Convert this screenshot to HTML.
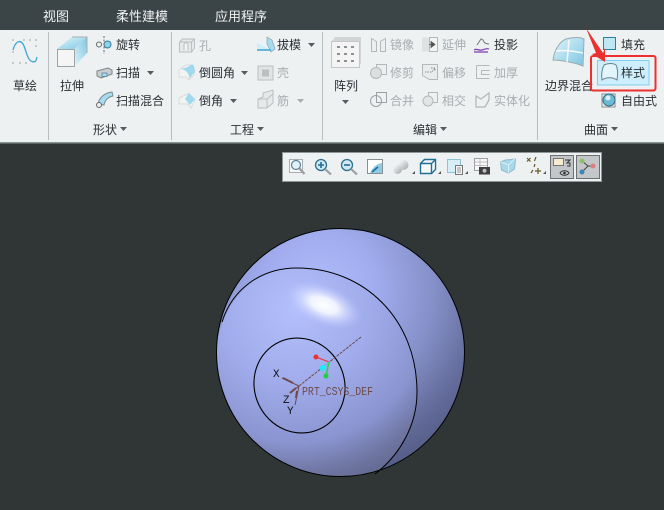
<!DOCTYPE html>
<html><head><meta charset="utf-8"><style>
html,body{margin:0;padding:0;width:664px;height:510px;overflow:hidden;background:#2f3635}
svg{display:block}
text{font-family:"Liberation Sans","Noto Sans CJK SC",sans-serif;font-size:12px;fill:#2b2f33}
.m{font-size:13px;fill:#f1f3f3}
.d{fill:#a9adb0}
.a{fill:#555b60}
.p{font-family:"Liberation Mono",monospace;font-size:11.500px;fill:#6e4a4a}
.q{font-family:"Liberation Mono",monospace;font-size:11px;fill:#111}
</style></head><body>
<svg width="664" height="510" viewBox="0 0 664 510" xmlns="http://www.w3.org/2000/svg">
<defs>
<radialGradient id="o" gradientUnits="userSpaceOnUse" cx="320" cy="290" r="190">
<stop offset="0" stop-color="#b0bcfa"/><stop offset=".3" stop-color="#a0acee"/><stop offset=".6" stop-color="#8590c8"/><stop offset=".85" stop-color="#636c9a"/><stop offset="1" stop-color="#555e88"/>
</radialGradient>
<radialGradient id="s" gradientUnits="userSpaceOnUse" cx="295" cy="310" r="190">
<stop offset="0" stop-color="#b4c0fd"/><stop offset=".4" stop-color="#a0abeb"/><stop offset=".7" stop-color="#8a94cf"/><stop offset=".86" stop-color="#6f76a2"/><stop offset="1" stop-color="#5d6488"/>
</radialGradient>
<radialGradient id="h" cx=".5" cy=".5" r=".5"><stop offset="0" stop-color="#fff"/><stop offset=".35" stop-color="#f4f6ff" stop-opacity=".95"/><stop offset="1" stop-color="#c0caff" stop-opacity="0"/></radialGradient>
<linearGradient id="c" x1="0" y1="0" x2="1" y2="1"><stop offset="0" stop-color="#e2f5fb"/><stop offset="1" stop-color="#7cc6e2"/></linearGradient>
<linearGradient id="c2" x1="0" y1="1" x2="1" y2="0"><stop offset="0" stop-color="#e2f5fb"/><stop offset="1" stop-color="#7cc6e2"/></linearGradient>
<linearGradient id="sb" x1="0" y1="0" x2="1" y2="1"><stop offset="0" stop-color="#fff"/><stop offset="1" stop-color="#a0a5aa"/></linearGradient>
<clipPath id="sph"><circle cx="340.500" cy="352.500" r="124"/></clipPath>
</defs>

<rect width="664" height="30" fill="#3b4547"/>
<text class="m" x="43" y="21">视图</text><text class="m" x="116" y="21">柔性建模</text><text class="m" x="215" y="21">应用程序</text>

<rect y="30" width="664" height="112" fill="#eef1f2"/>
<rect y="142" width="664" height="1.500" fill="#8b9292"/>
<g fill="#b7bcbe"><rect x="48" y="32" width="1" height="108"/><rect x="171" y="32" width="1" height="108"/><rect x="322" y="32" width="1" height="108"/><rect x="537" y="32" width="1" height="108"/></g>

<!-- sketch -->
<path d="M13 50C15 42 20 39 23 44S27 60 32 61.500 36 59 37 57" fill="none" stroke="#3da4d0" stroke-width="1.300"/>
<g fill="#666"><circle cx="13" cy="40" r=".6"/><circle cx="24" cy="40" r=".6"/><circle cx="30" cy="40" r=".6"/><circle cx="36" cy="40" r=".6"/><circle cx="13" cy="52" r=".6"/><circle cx="36" cy="46" r=".6"/><circle cx="13" cy="63" r=".6"/><circle cx="20" cy="63" r=".6"/><circle cx="26" cy="63" r=".6"/></g>
<text x="13" y="90">草绘</text>
<!-- extrude -->
<path d="M57 49L72 37H87L74 49Z" fill="url(#c)"/><path d="M74 49L87 37V53L74 67Z" fill="url(#c2)"/><rect x="57.500" y="49.500" width="17" height="17" fill="#f5f5f5" stroke="#a0a4a6"/><path d="M72 37h15v16" fill="none" stroke="#a9adb0"/>
<text x="60" y="90">拉伸</text>
<!-- revolve, sweep, blend -->
<circle cx="107.500" cy="44.500" r="3.500" fill="#8fd3ea" stroke="#2d7ea3"/><circle cx="99" cy="44.500" r="2.500" fill="none" stroke="#666"/><path d="M104 36v18" stroke="#666" stroke-dasharray="2 1.500"/>
<path d="M97 71l11-3 4 2v4l-11 4-4-2z" fill="#c9cdcf" stroke="#808487"/><rect x="102" y="73" width="5" height="3.500" fill="#a5dcef" stroke="#4f7b8c" stroke-width=".7"/>
<path d="M98 104c1-6 6-11 14-12l1 4c-5 1-8 4-9 9z" fill="#a5dcef" stroke="#7a8b93"/><circle cx="99" cy="105" r="2.500" fill="#eee" stroke="#666"/>
<text x="116" y="49">旋转</text><text x="116" y="77">扫描</text><path class="a" d="M147 71h7l-3.500 4z"/><text x="116" y="105">扫描混合</text>
<text x="93" y="134">形状</text><path class="a" d="M120 127h7l-3.500 4z"/>

<!-- engineering -->
<path d="M179.500 42l3-3h12v9l-3 4h-12z" fill="#e6e8e9" stroke="#bcc0c2"/><path d="M179.500 42h12v10M191.500 42l3-3" fill="none" stroke="#bcc0c2"/><path d="M184 50v-5c0-3 4-3 4 0v5" fill="#f2f3f3" stroke="#bcc0c2"/>
<text class="d" x="199" y="50">孔</text>
<path d="M257 42h6l4-5 5 3 3 9-4 3-8-1h-6z" fill="#eaf4f8"/><path d="M267 37l5 3 3 9-4 3-4-8z" fill="#a5dcef" stroke="#8ea2aa" stroke-width=".7"/><path d="M257 43v7h14" fill="#cfeef8"/><path d="M257 50h14" stroke="#3ba3cf" stroke-width="1.500"/>
<text x="277" y="49">拔模</text><path class="a" d="M308 43h7l-3.500 4z"/>
<path d="M179 70l7-5h4l5 5-1 5-5 5-3-3h-7z" fill="#f2f3f3" stroke="#d0d3d4" stroke-width=".7"/><path d="M181 69c4-1 8-2 11-5 3 2 3 6 2 9l-5 6c1-5-3-9-8-10z" fill="#9fd9ee"/>
<text x="199" y="77">倒圆角</text><path class="a" d="M241 71h7l-3.500 4z"/>
<rect x="258" y="66" width="15" height="14" fill="#e1e3e4" stroke="#bcc0c2"/><rect x="262" y="69.500" width="7" height="7" fill="#bcc0c2"/>
<text class="d" x="277" y="77">壳</text>
<path d="M179 98l8-4 1 0 7 6-4 8-3-4h-9z" fill="#f2f3f3" stroke="#d0d3d4" stroke-width=".7"/><path d="M185 99l4-6 6 6-5 6z" fill="#9fd9ee"/>
<text x="199" y="105">倒角</text><path class="a" d="M230 99h7l-3.500 4z"/>
<path d="M258 99l5-2v-4l10-3v13l-6 5h-9z" fill="#e6e8e9" stroke="#bcc0c2"/><path d="M258 99h9v9M267 99l6-5" fill="none" stroke="#bcc0c2"/>
<text class="d" x="277" y="105">筋</text><path class="d" d="M297 99h7l-3.500 4z"/>
<text x="230" y="134">工程</text><path class="a" d="M257 127h7l-3.500 4z"/>

<!-- pattern -->
<path d="M332 41l3-4h26v26l-3 4h-26z" fill="#d2d5d6"/><rect x="331.500" y="41.500" width="28" height="26" fill="#f4f4f4" stroke="#c4c7c9"/>
<g fill="#8d9194"><rect x="337" y="46" width="3" height="2"/><rect x="344" y="46" width="3" height="2"/><rect x="351" y="46" width="3" height="2"/><rect x="337" y="53" width="3" height="2"/><rect x="344" y="53" width="3" height="2"/><rect x="351" y="53" width="3" height="2"/><rect x="337" y="60" width="3" height="2"/><rect x="344" y="60" width="3" height="2"/><rect x="351" y="60" width="3" height="2"/></g>
<text x="334" y="90">阵列</text><path class="a" d="M342 100h7l-3.500 4z"/>

<!-- edit -->
<g fill="#eceeef" stroke="#b4b8ba">
<path d="M371.500 38.500l5 3v10h-5zM385.500 38.500l-5 3v10h5z"/>
<rect x="422" y="37.500" width="7" height="14" fill="#dfe2e3" stroke="none"/><rect x="429.500" y="37.500" width="8" height="14" fill="#f2f3f3"/>
<rect x="376.500" y="64.500" width="10" height="10"/><circle cx="376" cy="73" r="5.500" fill="#dcdfe0"/>
<path d="M422.500 64.500h15v15h-8l-7-4z" fill="#e9ebec"/>
<rect x="376.500" y="92.500" width="10" height="10" fill="none" stroke="#9da1a3"/><circle cx="376" cy="101" r="5.500" fill="none" stroke="#9da1a3"/>
<rect x="428.500" y="92.500" width="9" height="10" fill="none"/><circle cx="428" cy="101" r="5" fill="#e2e4e5"/>
<path d="M476.500 65.500h13M476.500 65.500v13h13M481.500 70.500h8M481.500 70.500v4h8" fill="none"/>
<path d="M476 96l5 3 8-6v7l-4 7h-9z" fill="none" stroke-width="1.300"/>
</g>
<path d="M431 41.500l4 3-4 3zM429 44.500h3" fill="#555" stroke="#555" stroke-width=".8"/>
<path d="M425 72h7l3-4M431 68h4v3" fill="none" stroke="#8f9395" stroke-dasharray="1.500 1"/>
<text class="d" x="390" y="49">镜像</text><text class="d" x="442" y="49">延伸</text><text x="494" y="49">投影</text>
<text class="d" x="390" y="77">修剪</text><text class="d" x="442" y="77">偏移</text><text class="d" x="494" y="77">加厚</text>
<text class="d" x="390" y="105">合并</text><text class="d" x="442" y="105">相交</text><text class="d" x="494" y="105">实体化</text>
<path d="M474 50c3-2 5 1 8 0s5-2 7-1M474 52h14" fill="none" stroke="#7b3fb0" stroke-width="1.200"/><path d="M477 45l4-6c3 0 2 3 4 4s3 1 4 1" fill="none" stroke="#777"/>
<text x="413" y="134">编辑</text><path class="a" d="M440 127h7l-3.500 4z"/>

<!-- boundary blend -->
<path d="M553 60c1-9 6-18 13-21 8-2 14-2 18 0l-1 27c-7-3-9-3-14-4-5-1-11-2-16-2z" fill="url(#c)" stroke="#99abb2"/><path d="M569 40l-2 22M556 51c9-1 18 0 27 2" stroke="#f5f9fa" stroke-width="1.500" fill="none"/>
<text x="545" y="90">边界混合</text>
<rect x="603.500" y="37.500" width="12" height="12" fill="#bfe6f3" stroke="#2d7ea3"/>
<text x="621" y="49">填充</text>
<rect x="597.500" y="60.500" width="51.500" height="24.500" fill="#cdeefc" stroke="#7fd0f0"/>
<path d="M602 80c-1-7 0-11 2-15 4-2 9-2 12 0 2 4 2 9 1 15-4-3-11-3-15 0z" fill="#e2f5fb" stroke="#6b828c" stroke-width="1"/>
<text x="621" y="77">样式</text>
<rect x="602" y="94" width="13" height="13" fill="none" stroke="#8a8f92"/><circle cx="609" cy="100" r="6" fill="#6cb9d7" stroke="#3b6c80"/><circle cx="608" cy="98" r="2.500" fill="#d9f1f9"/>
<text x="621" y="105">自由式</text>
<text x="584" y="134">曲面</text><path class="a" d="M611 127h7l-3.500 4z"/>
<rect x="591" y="56" width="64.500" height="34.500" rx="2" fill="none" stroke="#ee2f2f" stroke-width="2"/>
<path d="M586 28L603 53L605 48L605 62L592 54L596 53Z" fill="#ee2f2f"/>

<!-- toolbar -->
<rect x="282.500" y="152.500" width="319" height="29" fill="#eef1f2" stroke="#8f9596"/>
<g fill="none">
<rect x="289.500" y="159.500" width="13" height="13" fill="#f8f8f8" stroke="#a7adb0"/><circle cx="296" cy="165" r="4.500" fill="#dff2f9" stroke="#5b7f92" stroke-width="1.200"/><path d="M299.500 168.500l5 5.500" stroke="#9a9ea0" stroke-width="2.200"/>
<circle cx="321" cy="165" r="5.500" fill="#cfeaf5" stroke="#2d6d8f" stroke-width="1.300"/><path d="M318 165h6M321 162v6" stroke="#1e6d99" stroke-width="1.600"/><path d="M325 169l6 5.500" stroke="#9a9ea0" stroke-width="2.200"/>
<circle cx="347" cy="165" r="5.500" fill="#cfeaf5" stroke="#2d6d8f" stroke-width="1.300"/><path d="M344 165h6" stroke="#1e6d99" stroke-width="1.600"/><path d="M351 169l6 5.500" stroke="#9a9ea0" stroke-width="2.200"/>
<rect x="367.500" y="159.500" width="15" height="14" fill="#8fcbe2" stroke="#8a9092"/><path d="M368 160h14v3c-6 1-9 4-12 10h-2z" fill="#fff"/><path d="M372 172l6-5" stroke="#1e6d99" stroke-width="1.500"/>
<circle cx="403.500" cy="165" r="5" fill="url(#sb)"/><circle cx="397.500" cy="169.500" r="4.500" fill="url(#sb)"/>
<path d="M420.500 163.500l4-4h11v10l-4 4h-11z" stroke="#1f6f92" stroke-width="1.400" fill="#f8f9f9"/><path d="M420.500 163.500h11v10M431.500 163.500l4-4" stroke="#1f6f92" stroke-width="1.400"/>
<rect x="447.500" y="159.500" width="13" height="13" fill="#d8eef7" stroke="#8fc2d8"/><rect x="455.500" y="165.500" width="7" height="9" fill="#f5f5f5" stroke="#777"/><path d="M457 168h4M457 170h4M457 172h4" stroke="#777" stroke-width=".7"/>
<rect x="474.500" y="158.500" width="13" height="12" fill="#f7f7f7" stroke="#a0a0a0"/><path d="M475 162h12M475 165.500h12M480 159v11" stroke="#b0b0b0" stroke-width=".7"/><rect x="479" y="167" width="11" height="7.500" fill="#3f3f3f"/><circle cx="484.500" cy="170.800" r="2" fill="#bbb"/>
<path d="M500.500 162l5-2 10-1-1 10-6 4-7-3z" fill="#a8d8ea" stroke="#8dbbcf"/><path d="M500.500 162l8 3 6-6M508.500 165v8" stroke="#d9eef6"/>
<path d="M527 158l3.500 3.500M530.500 158l-3.500 3.500M536 157l-1.500 4M535 164l-1 3M531 173l2-3M535 171h6M538 168v6" stroke="#6b5a2a" stroke-width="1.200"/>
</g>
<g fill="#555"><path d="M412 174l3-3v3zM438 174l3-3v3zM465 174l3-3v3zM543 174l3-3v3z"/></g>
<rect x="550.500" y="155.500" width="23" height="23" fill="#c4c7c9" stroke="#6c7072"/>
<rect x="553.500" y="158.500" width="10" height="7" fill="#f7ecd0" stroke="#777"/><path d="M565 160h5l-3 3h3v3h-3M560 173c2-3 7-3 9 0-2 3-7 3-9 0z" fill="none" stroke="#333"/><circle cx="564.500" cy="173" r="1.300" fill="#333"/>
<rect x="576.500" y="155.500" width="23" height="23" fill="#c4c7c9" stroke="#6c7072"/>
<path d="M582 161l6 5 5 0M588 166l-6 6" stroke="#444" fill="none"/><circle cx="582" cy="161" r="2.500" fill="#8cc06e"/><circle cx="593" cy="166" r="2.500" fill="#dc7f7f"/><circle cx="582" cy="172" r="2.500" fill="#3f86b8"/>

<!-- sphere -->
<circle cx="340.500" cy="352.500" r="124" fill="url(#o)"/>
<g clip-path="url(#sph)">
<path d="M216 345C226 295 258 268 297 268C365 268 417 320 417 392C417 425 400 455 375 474L300 500L200 450Z" fill="url(#s)"/>
<ellipse cx="324" cy="305" rx="40" ry="20" transform="rotate(22 324 305)" fill="url(#h)"/>
</g>
<circle cx="340.500" cy="352.500" r="124" fill="none" stroke="#000"/>
<path d="M222 322C232 290 260 268 297 268C365 268 417 320 417 392C417 425 400 455 375 474" fill="none" stroke="#000"/>
<ellipse cx="299.500" cy="385.500" rx="45" ry="48" transform="rotate(-25 299.500 385.500)" fill="none" stroke="#000" stroke-width="1.100"/>

<!-- csys -->
<g stroke="#6e4a4a" fill="none"><path d="M299 386L361 337" stroke-dasharray="3 1"/><path d="M282 378L299 386M299 386L290 393M299 386L295 405"/><path d="M283 378l10 5M290 393l6-5M296 398l1-7" stroke-width="2"/></g>
<path d="M316 357L329 362" stroke="#ee3333" stroke-width="1.200" fill="none"/><path d="M329 362L326 376" stroke="#33cc44" stroke-width="1.500"/><path d="M322 368L329 362" stroke="#33dddd"/>
<circle cx="316" cy="357" r="2.500" fill="#f03030"/><circle cx="326" cy="376" r="2.500" fill="#22cc44"/><circle cx="322.500" cy="368" r="3" fill="#22e8f8"/>
<text class="p" x="302" y="395" textLength="71" lengthAdjust="spacingAndGlyphs">PRT_CSYS_DEF</text>
<text class="q" x="273" y="377">X</text><text class="q" x="283" y="403">Z</text><text class="q" x="287" y="414">Y</text>
</svg>
</body></html>
